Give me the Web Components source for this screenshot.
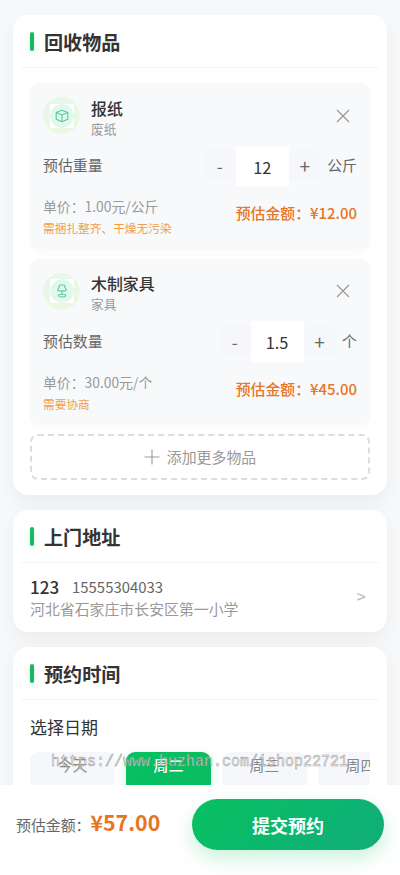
<!DOCTYPE html>
<html lang="zh-CN">
<head>
<meta charset="utf-8">
<title>预约回收</title>
<style>
html,body{margin:0;height:100%;overflow:hidden}
body{font-family:"Noto Sans CJK SC",sans-serif;color:#333;background:#f7f9fb}
</style>
</head>
<body>
<booking-page>
  <section-card heading="回收物品" style="height:480px">
    <item-list>
      <recycle-item name="报纸" kind="废纸" measure="预估重量" count="12" unit="公斤" price="单价：1.00元/公斤" note="需捆扎整齐、干燥无污染" amount="预估金额：¥12.00">
        <svg slot="icon" width="14" height="14" viewBox="0 0 14 14" fill="none" stroke="#5ec99a" stroke-width="1.1" stroke-linejoin="round"><path d="M7 1.2 12.8 3.6V10.2L7 12.8 1.2 10.2V3.6ZM1.2 3.6 7 6 12.8 3.6M7 6V12.8"/></svg>
      </recycle-item>
      <recycle-item name="木制家具" kind="家具" measure="预估数量" count="1.5" unit="个" price="单价：30.00元/个" note="需要协商" amount="预估金额：¥45.00">
        <svg slot="icon" width="14" height="14" viewBox="0 0 14 14" fill="none" stroke="#5ec99a" stroke-width="1.1" stroke-linejoin="round"><path d="M4.8 1H9.2L11.3 6.3Q9.8 7.4 8.6 6.7Q7 7.8 5.4 6.7Q4.2 7.4 2.7 6.3ZM7 7.3V10.4"/><ellipse cx="7" cy="11.6" rx="3.7" ry="1.4"/></svg>
      </recycle-item>
      <add-button>添加更多物品</add-button>
    </item-list>
  </section-card>
  <section-card heading="上门地址" style="height:122px">
    <address-row name="123" phone="15555304033">河北省石家庄市长安区第一小学</address-row>
  </section-card>
  <section-card heading="预约时间" style="height:220px">
    <date-picker>
      <date-cell>今天</date-cell><date-cell active>周二</date-cell><date-cell>周三</date-cell><date-cell>周四</date-cell>
    </date-picker>
  </section-card>
  <submit-bar slot="footer" label="预估金额：" total="¥57.00">提交预约</submit-bar>
  <water-mark slot="overlay"></water-mark>
</booking-page>
<script>
const define = (tag, render) => customElements.define(tag, class extends HTMLElement {
  connectedCallback() {
    if (this.shadowRoot) return;
    this.attachShadow({ mode: 'open' }).innerHTML = render(k => this.getAttribute(k) || '');
  }
});

define('booking-page', () => `<style>
:host{display:flex;flex-direction:column;position:relative;height:875px;width:400px;overflow:hidden}
main{height:770px;flex:none;box-sizing:border-box;padding:0 13px;display:flex;flex-direction:column;gap:15px;margin-top:15px}
</style><main><slot></slot></main><slot name="footer"></slot><slot name="overlay"></slot>`);

define('section-card', a => `<style>
:host{display:block;flex:none;background:#fff;border-radius:15px;box-shadow:0 8px 24px rgba(0,0,0,.06)}
header{height:52px;margin:0 8px;padding:0 9px;border-bottom:1px solid #f3f4f5;display:flex;align-items:center;gap:10px}
i{width:4px;height:19px;border-radius:2px;background:#17b963;box-shadow:0 2px 6px rgba(7,193,96,.2)}
h2{font-size:19.1px;line-height:28px;font-weight:700;margin:1px 0 0}
</style><header><i></i><h2>${a('heading')}</h2></header><slot></slot>`);

define('item-list', () => `<style>
:host{display:flex;flex-direction:column;gap:9px;padding:15px 17px 0}
</style><slot></slot>`);

define('recycle-item', a => `<style>
:host{display:flex;flex-direction:column;box-sizing:border-box;height:166.5px;padding:13px;border-radius:9px;background:#f8f9fb;box-shadow:0 2px 8px rgba(0,0,0,.02)}
.top,.qty,.foot{display:flex;align-items:center}
.top{height:39px}
.badge{width:37px;height:37px;border-radius:50%;background:linear-gradient(135deg,#e6f7e9,#edf7e2);display:grid;place-items:center}
.pic{width:24px;height:24px;display:grid;place-items:center;background:radial-gradient(circle,#e0f8ee 11.5px,#fff 12px)}
.names{margin-left:11px;flex:1;display:flex;flex-direction:column}
.name{font-size:15.9px;line-height:22px;font-weight:500;margin-top:4px}
.kind{font-size:12.7px;line-height:18px;color:#999}
.x{margin-right:7px}
.qty{height:40.5px;margin-top:10.6px;font-size:14.9px;color:#666}
.label,.unit{line-height:22px;margin-top:-1px}
.label{flex:1}
.btn{width:32px;height:31px;background:#f6f7fb;border-radius:5px;display:grid;place-items:center;font-size:17px}
.plus{font-size:19px}
.val{width:53px;height:40.5px;background:#fff;color:#333;font-size:16.3px;display:flex;align-items:center;justify-content:center;padding-top:2px;box-sizing:border-box}
.unit{margin-left:6.5px}
.foot{margin-top:8.4px;justify-content:space-between;align-items:flex-start}
.price{font-size:13.85px;line-height:24px;color:#999}
.note{font-size:11.7px;line-height:19px;color:#f0a04b}
.amount{font-size:14.9px;line-height:22px;font-weight:500;color:#e87426;margin-top:8px}
</style>
<div class="top"><div class="badge"><div class="pic"><slot name="icon"></slot></div></div>
<div class="names"><span class="name">${a('name')}</span><span class="kind">${a('kind')}</span></div>
<svg class="x" width="14" height="14" viewBox="0 0 14 14" stroke="#999" stroke-width="1.2"><path d="M1 1 13 13M13 1 1 13"/></svg></div>
<div class="qty"><span class="label">${a('measure')}</span><span class="btn">-</span><span class="val">${a('count')}</span><span class="btn plus">+</span><span class="unit">${a('unit')}</span></div>
<div class="foot"><div><div class="price">${a('price')}</div><div class="note">${a('note')}</div></div><div class="amount">${a('amount')}</div></div>`);

define('add-button', () => `<style>
:host{display:flex;align-items:center;justify-content:center;gap:7px;box-sizing:border-box;height:46px;border:2px dashed #ddd;border-radius:8px;color:#999;font-size:14.9px}
span{margin-top:-2px}
</style><svg width="16" height="16" viewBox="0 0 16 16" stroke="#999" stroke-width="1.1"><path d="M8 .5V15.5M.5 8H15.5"/></svg><span><slot></slot></span>`);

define('address-row', a => `<style>
:host{display:flex;align-items:center;justify-content:space-between;padding:12px 21px 0 17px}
.who{display:flex;align-items:center;gap:13px;height:23px}
b{font-size:17px;font-weight:500}
.phone{font-size:14.9px;color:#666}
.addr{font-size:14.9px;line-height:22px;color:#999}
.go{color:#bbb;font-size:17px;line-height:20px;margin-top:-3px}
</style><div><div class="who"><b>${a('name')}</b><span class="phone">${a('phone')}</span></div><div class="addr"><slot></slot></div></div><span class="go">&gt;</span>`);

define('date-picker', () => `<style>
:host{display:block;padding:14px 17px 0}
.t{font-size:17px;line-height:26px}
.row{display:flex;gap:11px;overflow:hidden;margin:0 0 0 -8px;padding:12px 0 0 8px}
</style><div class="t">选择日期</div><div class="row"><slot></slot></div>`);

define('date-cell', () => `<style>
:host{display:block;flex:0 0 85px;height:80px;border-radius:9px;background:#f6f7fb;color:#888;font-size:14.9px;line-height:26px;text-align:center}
:host([active]){background:linear-gradient(135deg,#07c160,#09bb60);color:#fff;font-weight:500;box-shadow:0 4px 12px rgba(7,193,96,.2)}
</style><slot></slot>`);

define('submit-bar', a => `<style>
:host{display:flex;justify-content:space-between;box-sizing:border-box;height:90px;padding:14px 16px 0;background:#fff;position:relative;flex:none}
.sum{display:flex;align-items:baseline;height:51px;line-height:46px;font-size:14.9px;color:#666}
b{font-size:21.3px;color:#e87422}
button{font:700 18px "Noto Sans CJK SC",sans-serif;width:192px;height:51px;border:0;border-radius:26px;color:#fff;background:linear-gradient(135deg,#07c160,#10ad7a);box-shadow:0 8px 20px rgba(7,193,96,.22)}
</style><div class="sum"><span>${a('label')}</span><b>${a('total')}</b></div><button><slot></slot></button>`);

define('water-mark', () => `<style>
:host{display:block;position:absolute;left:0;top:745px;width:400px;height:30px;pointer-events:none}
svg{display:block}
text{font-family:"Liberation Mono",monospace;font-size:15px;fill:#eee;fill-opacity:.75;stroke:#777;stroke-width:.5;stroke-opacity:.75}
</style><svg width="400" height="30"><text x="51" y="18" transform="scale(1 1.15)">https://www.huzhan.com/ishop22721</text></svg>`);
</script>
</body>
</html>
